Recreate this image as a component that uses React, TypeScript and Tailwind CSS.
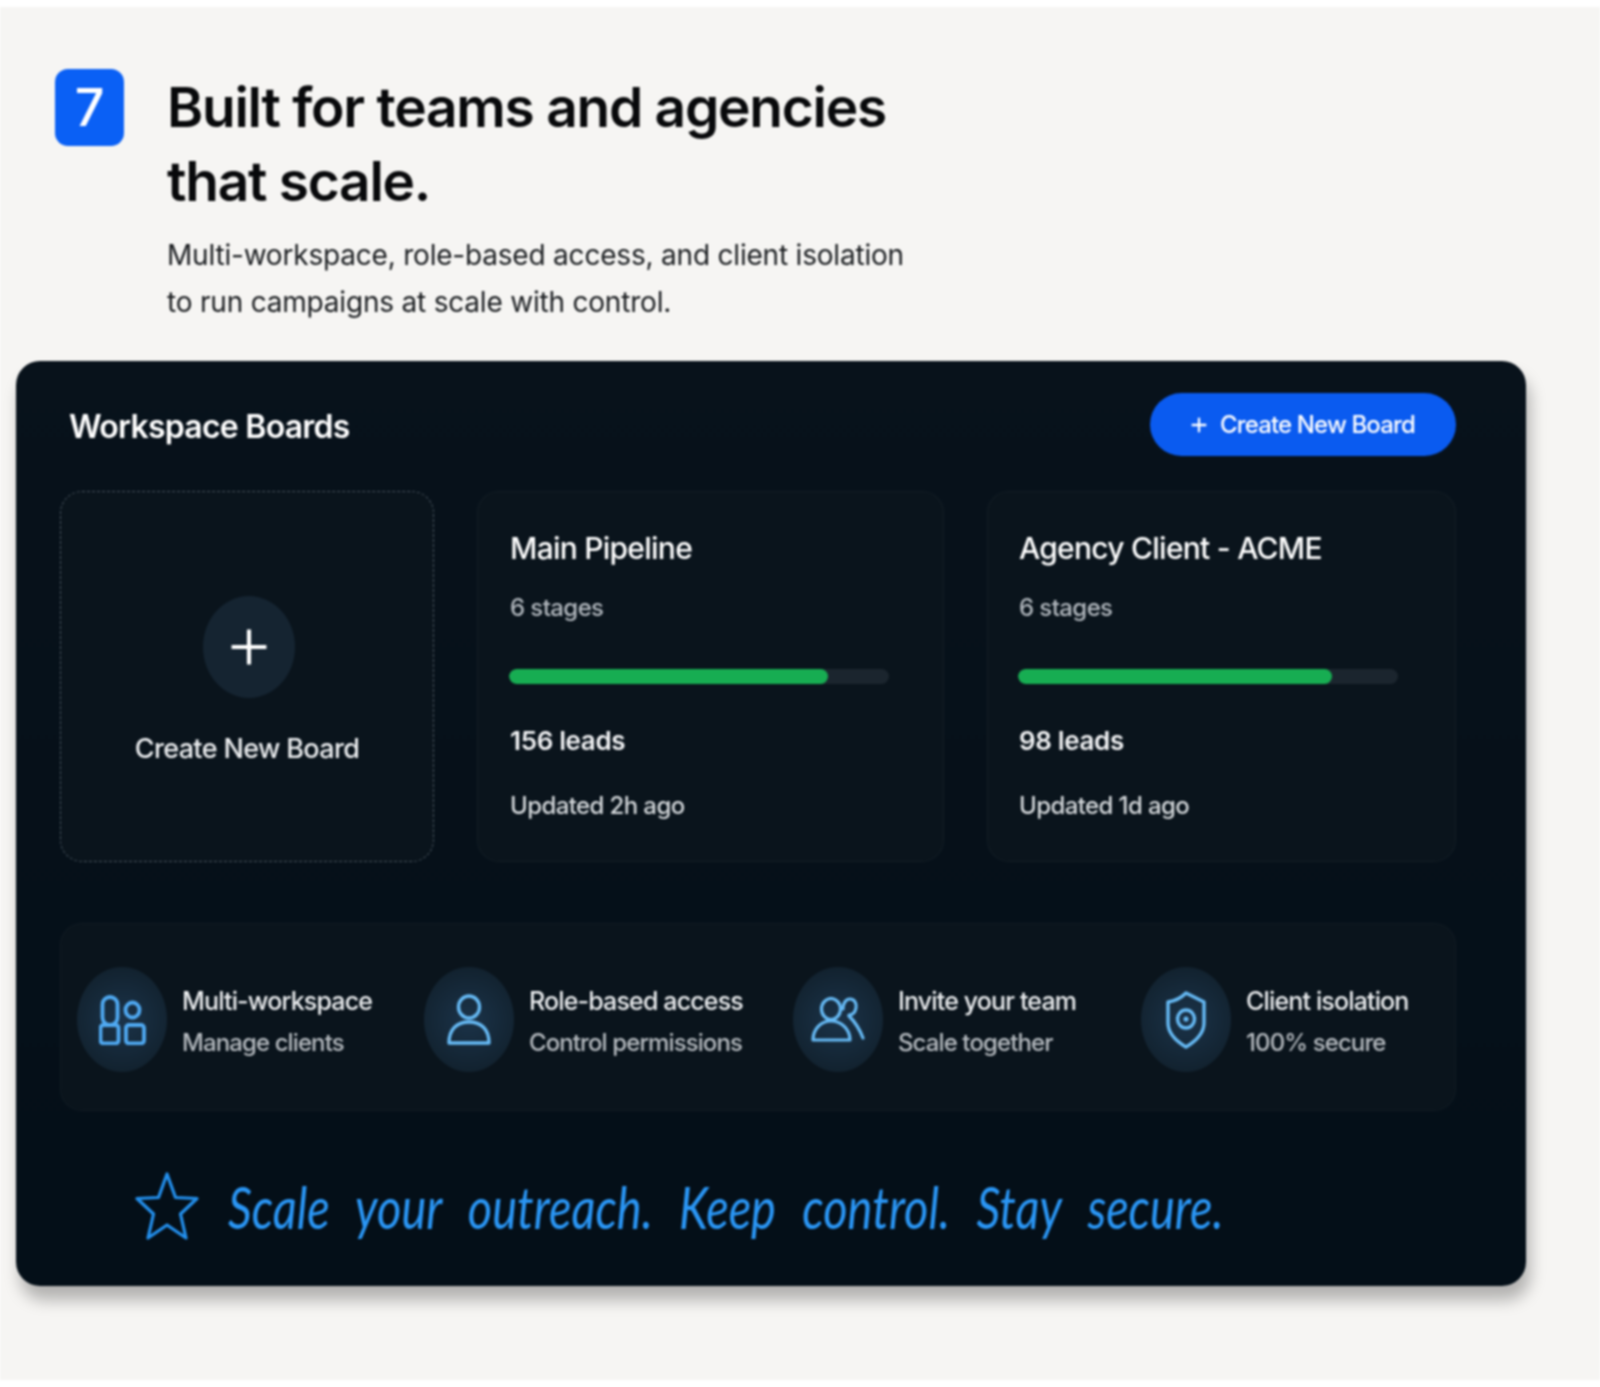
import React from "react";

function Plus({ size, sw, className }: { size: number; sw: number; className?: string }) {
  return (
    <svg width={size} height={size} viewBox="0 0 24 24" fill="none" stroke="currentColor" strokeWidth={sw} className={className}>
      <path d="M12 1v22M1 12h22" />
    </svg>
  );
}

function MultiIcon() {
  return (
    <svg width="47" height="50" viewBox="0 0 47 50" fill="none" stroke="#4fa9f2" strokeWidth="3.8">
      <rect x="3.5" y="2" width="15" height="28" rx="7.5" />
      <ellipse cx="33.5" cy="15" rx="7" ry="7.5" />
      <rect x="1.5" y="30" width="18" height="18.5" rx="3" />
      <rect x="27" y="30" width="18" height="18.5" rx="3" />
    </svg>
  );
}
function PersonIcon() {
  return (
    <svg width="44" height="52" viewBox="0 0 44 52" fill="none" stroke="#66baf5" strokeWidth="3.4">
      <ellipse cx="22" cy="13" rx="10.5" ry="11" />
      <path d="M2 49c0-14 8-21 20-21s20 7 20 21z" strokeLinejoin="round" />
    </svg>
  );
}
function TeamIcon() {
  return (
    <svg width="54" height="46" viewBox="0 0 54 46" fill="none" stroke="#66baf5" strokeWidth="3.2" strokeLinecap="round" strokeLinejoin="round">
      <ellipse cx="20" cy="12" rx="9.5" ry="10.5" />
      <path d="M2 43c0-11 8-19 18-19s19 8 19 19z" />
      <path d="M32 12c0-6 3-10 7-10s7 4 6 9-4 7-7 7" />
      <path d="M38 19c6 6 11 14 14 22" />
    </svg>
  );
}
function ShieldIcon() {
  return (
    <svg width="42" height="58" viewBox="0 0 42 58" fill="none" stroke="#66baf5" strokeWidth="3.4" strokeLinejoin="round">
      <path d="M21 2 39 11v21c0 10-8 18-18 24C11 50 3 42 3 32V11c7-1 13-4 18-9z" />
      <ellipse cx="21" cy="28" rx="8.5" ry="9" />
      <ellipse cx="21" cy="28" rx="2.5" ry="2.6" fill="#66baf5" stroke="none" />
    </svg>
  );
}

function Board({ title, count, pct, leads, updated, className }: { title: string; count: string; pct: string; leads: string; updated: string; className: string }) {
  return (
    <div className={`${className} h-[371px] rounded-[22px] border border-white/[0.04] bg-[#0a141c] pt-[36px]`}>
      <div className="pl-[1px] text-[30px] font-medium leading-[40px] tracking-[-0.75px] text-white">{title}</div>
      <div className="mt-[24px] pl-[1px] text-[24px] font-medium leading-[32px] tracking-[-0.6px] text-[#b3b9bf]">{count}</div>
      <div className="mt-[45px] h-[15px] w-[380px] overflow-hidden rounded-full bg-[#1b252e]">
        <div className="h-full rounded-full bg-[#17ad52]" style={{ width: pct }} />
      </div>
      <div className="mt-[39px] pl-[1px] text-[26px] font-semibold leading-[36px] tracking-[-0.35px] text-[#f2f3f5]">{leads}</div>
      <div className="mt-[29px] pl-[1px] text-[24px] font-medium leading-[36px] tracking-[-0.6px] text-[#d4d8db]">{updated}</div>
    </div>
  );
}

function Feature({ icon, title, sub, className }: { icon: React.ReactNode; title: string; sub: string; className: string }) {
  return (
    <div className={`flex items-center ${className}`}>
      <div className="flex h-[105px] w-[90px] shrink-0 items-center justify-center rounded-[50%] bg-[radial-gradient(circle,#1b3349_0%,#12222f_75%)]">
        {icon}
      </div>
      <div className="ml-[15px] mt-[5px] whitespace-nowrap">
        <div className="text-[25px] font-medium leading-[42px] tracking-[-0.85px] text-[#eceef0]">{title}</div>
        <div className="text-[24px] font-medium leading-[42px] tracking-[-0.9px] text-[#b6bbc0]">{sub}</div>
      </div>
    </div>
  );
}

export default function App() {
  return (
    <div className="flex h-[1387px] w-[1600px] flex-col overflow-hidden bg-white pb-[7px] pt-[7px] font-['Inter',sans-serif] blur-[0.8px]">
      <div className="flex flex-1 flex-col bg-[#f6f5f3] pl-[16px]">
        <header className="flex pl-[39px] pt-[62px]">
          <div className="flex h-[77px] w-[69px] items-center justify-center rounded-[13px] bg-[#0a60f5] text-[52px] font-medium text-white">7</div>
          <div className="ml-[43px] pt-[1px]">
            <h1 className="text-[55px] font-semibold leading-[74px] tracking-[-1.25px] text-[#08090b]">
              Built for teams and agencies
              <br />
              that scale.
            </h1>
            <p className="mt-[14px] text-[28px] leading-[47px] tracking-[-0.2px] text-[#1a1d20]">
              Multi-workspace, role-based access, and client isolation
              <br />
              to run campaigns at scale with control.
            </p>
          </div>
        </header>

        <main className="mt-[35px] h-[925px] w-[1510px] rounded-[24px] bg-[linear-gradient(180deg,#08121b_0%,#040f18_100%)] pl-[44px] pr-[70px] shadow-[4px_14px_16px_rgba(0,0,0,0.28)]">
          <div className="flex items-center justify-between pt-[32px]">
            <div className="pl-[9px] pt-[4px] text-[32px] font-semibold leading-[59px] tracking-[-0.75px] text-white">Workspace Boards</div>
            <button className="flex h-[63px] w-[306px] items-center justify-center gap-[13px] rounded-full bg-[#0a5bf0] text-[24px] font-medium tracking-[-0.87px] text-white">
              <Plus size={16} sw={3.4} />
              Create New Board
            </button>
          </div>

          <div className="mt-[35px] flex gap-[43px]">
            <div className="flex h-[371px] w-[374px] flex-col items-center rounded-[22px] border border-dashed border-[#4a555f] bg-[#0a141c] pt-[104px]">
              <div className="ml-[4px] flex h-[102px] w-[92px] items-center justify-center rounded-[50%] bg-[#152431] text-white">
                <Plus size={38} sw={2.6} />
              </div>
              <div className="mt-[33px] text-[27px] font-medium leading-[36px] tracking-[-0.65px] text-[#eceef0]">Create New Board</div>
            </div>
            <Board title="Main Pipeline" count="6 stages" pct="84%" leads="156 leads" updated="Updated 2h ago" className="w-[467px] pl-[31px]" />
            <Board title="Agency Client - ACME" count="6 stages" pct="82.5%" leads="98 leads" updated="Updated 1d ago" className="w-[469px] pl-[30px]" />
          </div>

          <div className="mt-[61px] flex h-[188px] w-[1396px] items-start rounded-[22px] border border-white/[0.03] bg-[#0a141c] pl-[16px] pt-[43px]">
            <Feature icon={<MultiIcon />} title="Multi-workspace" sub="Manage clients" className="w-[347px]" />
            <Feature icon={<PersonIcon />} title="Role-based access" sub="Control permissions" className="w-[369px]" />
            <Feature icon={<TeamIcon />} title="Invite your team" sub="Scale together" className="w-[348px]" />
            <Feature icon={<ShieldIcon />} title="Client isolation" sub="100% secure" className="" />
          </div>

          <div className="mt-[60px] flex items-center pl-[75px]">
            <svg width="64" height="70" viewBox="0 0 64 70" fill="none" stroke="#2390ee" strokeWidth="3.2" strokeLinejoin="round" className="shrink-0">
              <path d="M32 3 40.5 26.5 62 27.5 45.5 43 51 67 32 54 13 67 18.5 43 2 27.5 23.5 26.5z" />
            </svg>
            <div className="ml-[29px] origin-left scale-x-[0.81] whitespace-nowrap pt-[2px] font-['Lato',sans-serif] text-[58px] font-normal italic leading-[64px] text-[#2a96f5] [word-spacing:19px]">
              Scale your outreach. Keep control. Stay secure.
            </div>
          </div>
        </main>
      </div>
    </div>
  );
}
